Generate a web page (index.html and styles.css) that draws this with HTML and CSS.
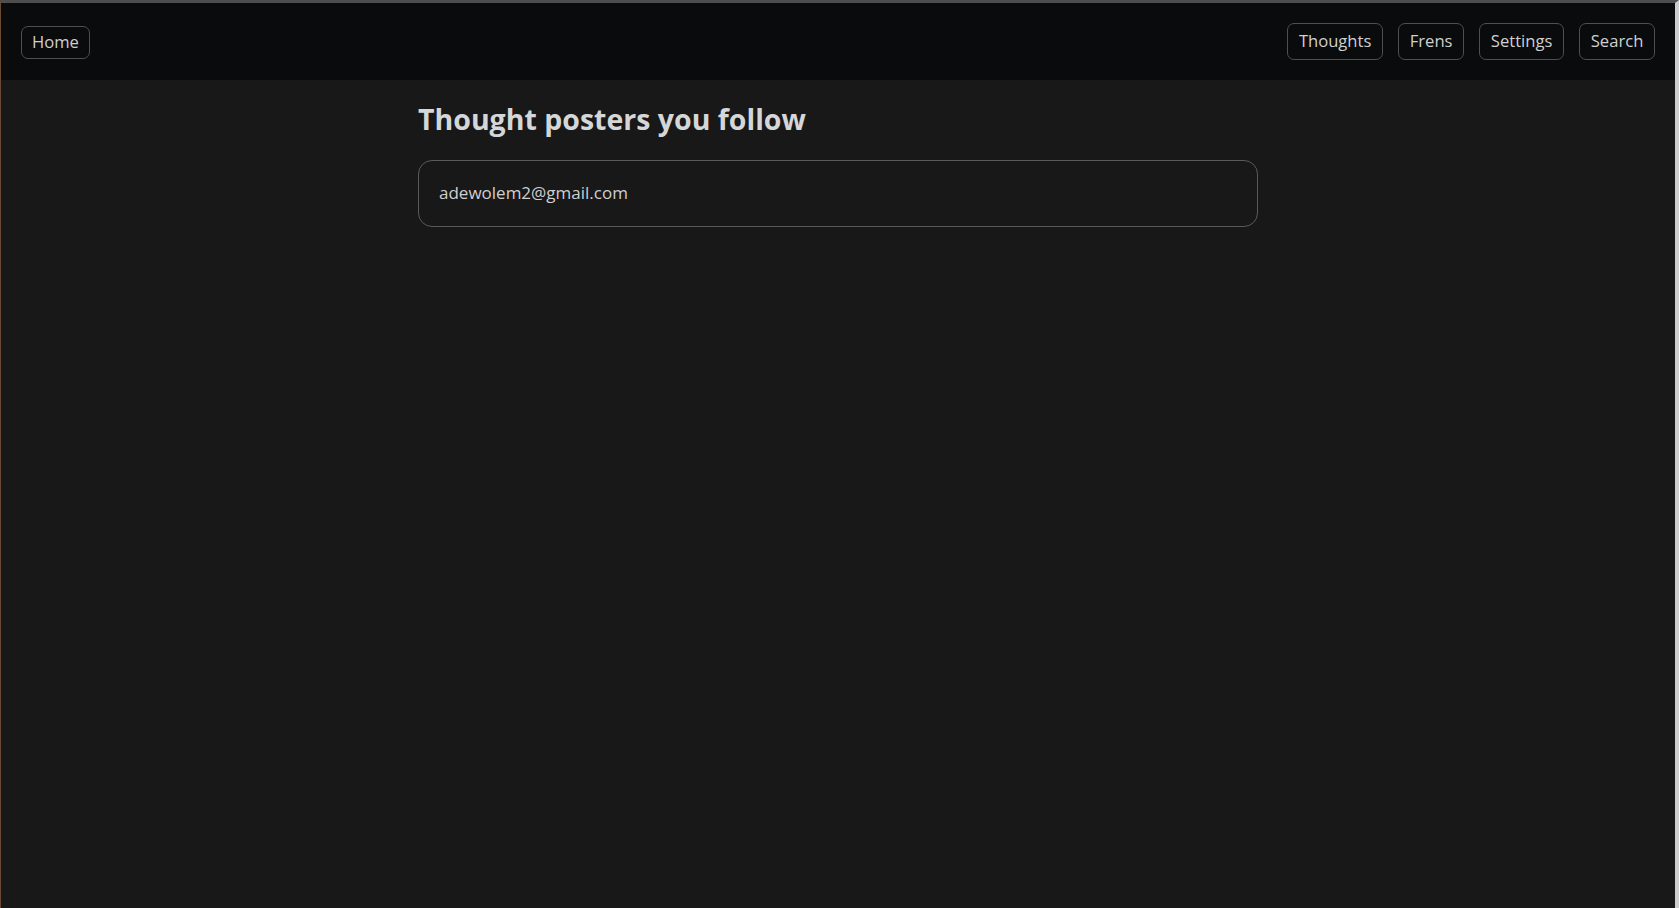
FILE: index.html
```html
<!DOCTYPE html>
<html lang="en">
<head>
<meta charset="utf-8">
<title>Thought posters you follow</title>
<link rel="stylesheet" href="styles.css">
</head>
<body>
<div class="window">
  <header class="topbar">
    <a class="btn btn-home" href="#">Home</a>
    <nav class="nav">
      <a class="btn" href="#">Thoughts</a>
      <a class="btn" href="#">Frens</a>
      <a class="btn" href="#">Settings</a>
      <a class="btn" href="#">Search</a>
    </nav>
  </header>
  <main class="content">
    <h1 class="title">Thought posters you follow</h1>
    <div class="card">adewolem2@gmail.com</div>
  </main>
</div>
</body>
</html>
```
FILE: styles.css
```css
* { box-sizing: border-box; }
html, body {
  margin: 0;
  padding: 0;
  height: 100%;
  background: #181818;
}
body {
  font-family: "Open Sans", "Noto Sans", sans-serif;
  color: #d2d2d2;
}
.window {
  height: 908px;
  display: flex;
  flex-direction: column;
  border-top: 3px solid #4e4e4e;
  border-left: 1px solid #6b4a33;
  border-right: 4px solid #cdcdcd;
  background: #181818;
  overflow: hidden;
}
.topbar {
  height: 77px;
  flex: none;
  display: flex;
  align-items: center;
  justify-content: space-between;
  padding: 0 20px;
  background: #0a0b0d;
}
.nav {
  display: flex;
  gap: 15px;
}
.btn {
  display: block;
  font-size: 16.6px;
  line-height: 23px;
  padding: 5px 10.7px 7px;
  border: 1px solid #4f4f4f;
  border-radius: 7px;
  color: #d0d0d0;
  text-decoration: none;
}
.btn-home {
  padding: 3px 10px 5px;
  margin-top: 2px;
}
.content {
  width: 840px;
  margin: 0 auto;
  padding-top: 22px;
}
.title {
  margin: 0 0 24px;
  font-size: 28.5px;
  line-height: 34px;
  font-weight: 700;
  color: #d4d6d8;
}
.card {
  border: 1px solid #5a5a5a;
  border-radius: 14px;
  padding: 20px 20px 21px;
  font-size: 17px;
  line-height: 24px;
  color: #cfcfcf;
}
```
